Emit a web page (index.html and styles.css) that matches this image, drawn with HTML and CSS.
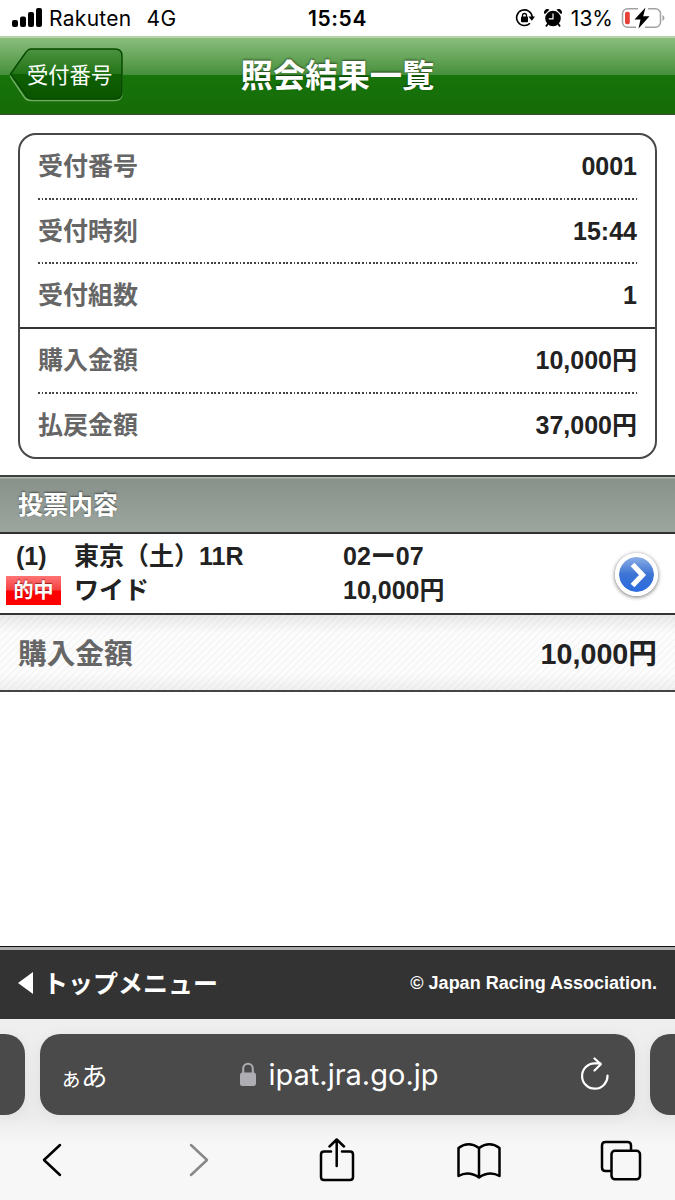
FILE: index.html
```html
<!DOCTYPE html>
<html lang="ja">
<head>
  <meta charset="UTF-8">
  <title>照会結果一覧</title>
  <link rel="stylesheet" href="styles.css">
</head>
<body>

<div class="status-bar">
  <div class="carrier">
    <svg class="signal" width="30" height="20" viewBox="0 0 30 20">
      <rect x="0" y="12" width="6" height="7" rx="2"/>
      <rect x="8" y="8.5" width="6" height="10.5" rx="2"/>
      <rect x="16" y="4" width="6" height="15" rx="2"/>
      <rect x="24" y="0" width="6" height="19" rx="2"/>
    </svg>
    <span class="carrier-name">Rakuten</span>
    <span>4G</span>
  </div>
  <div class="clock">15:54</div>
  <div class="indicators">
    <svg width="20" height="20" viewBox="0 0 20 20">
      <path d="M15 15.200A7.800 7.800 0 1 1 17.200 9" fill="none" stroke="#000" stroke-width="1.6"/>
      <path d="M13.400 8.400h6.600L16.900 12.800z"/>
      <rect x="6" y="8.600" width="7" height="5.600" rx="1"/>
      <path d="M7.500 9V7.500a2 2 0 0 1 4 0V9" fill="none" stroke="#000" stroke-width="1.3"/>
    </svg>
    <svg class="alarm" width="18" height="18" viewBox="0 0 18 18">
      <circle cx="9" cy="9.500" r="7.800"/>
      <path d="M.8 5.200a3.200 3.200 0 0 1 4.600-4.400zM12.600 .8a3.200 3.200 0 0 1 4.600 4.400z"/>
      <path d="M4 14.500L2 17.400M14 14.500L16 17.400" stroke="#000" stroke-width="1.800"/>
      <path d="M9 4.500V9.800H4.800" fill="none" stroke="#fff" stroke-width="1.200"/>
    </svg>
    <span class="percent">13%</span>
    <svg class="battery" width="44" height="22" viewBox="0 0 44 22">
      <path d="M17 1.8H6.5A5 5 0 0 0 1.5 6.8V15.200a5 5 0 0 0 5 5H15M27 1.8H34.500a5 5 0 0 1 5 5V15.200a5 5 0 0 1-5 5H24" fill="none" stroke="#a2a2a2" stroke-width="1.5"/>
      <path d="M41.500 8v6q2-1 2-3t-2-3z" fill="#a2a2a2"/>
      <rect x="4" y="4.800" width="4.800" height="12.400" rx="1.700" fill="#e8413a"/>
      <path d="M24.500 .5L13.500 12.500H19.500L17.500 21.500L28.500 9.200H22.200z"/>
    </svg>
  </div>
</div>

<div class="header">
  <a class="back">
    <svg width="116" height="56" viewBox="0 0 116 56">
      <defs>
        <linearGradient id="backFill" x1="0" y1="0" x2="0" y2="1">
          <stop offset="0" stop-color="#4d9340"/>
          <stop offset=".5" stop-color="#237417"/>
          <stop offset=".5" stop-color="#0f6003"/>
          <stop offset="1" stop-color="#095400"/>
        </linearGradient>
      </defs>
      <path d="M21 3.500H107Q114 3.500 114 10.500V46Q114 53.500 107 53.500H23Q19 53.500 16.500 50.500L2.500 29.500L16 7Q18.500 3.500 21 3.500z" fill="none" stroke="#6fae62" stroke-width="1.500"/>
      <path d="M23 2H107Q114 2 114 9V45Q114 52 107 52H25Q21 52 18.500 49L2.500 27L17 6.500Q20 2 23 2z" fill="url(#backFill)" stroke="#074a00" stroke-width="1.500"/>
    </svg>
    <span>受付番号</span>
  </a>
  <h1>照会結果一覧</h1>
</div>

<div class="summary">
  <div class="row"><span class="label">受付番号</span><span>0001</span></div>
  <div class="row"><span class="label">受付時刻</span><span>15:44</span></div>
  <div class="row group-end"><span class="label">受付組数</span><span>1</span></div>
  <div class="row"><span class="label">購入金額</span><span>10,000円</span></div>
  <div class="row last"><span class="label">払戻金額</span><span>37,000円</span></div>
</div>

<h2 class="section-title">投票内容</h2>

<div class="bet">
  <div class="bet-number">
    <span>(1)</span>
    <span class="hit">的中</span>
  </div>
  <div class="bet-race">
    <span>東京（土）11R</span>
    <span>ワイド</span>
  </div>
  <div class="bet-amount">
    <span>02<span class="dash">ー</span>07</span>
    <span>10,000円</span>
  </div>
  <div class="arrow">
    <svg width="18" height="26" viewBox="0 0 18 26">
      <path d="M3.500 2.500L13.500 13L3.500 23.500" fill="none" stroke="#fff" stroke-width="5.200"/>
    </svg>
  </div>
</div>

<div class="total">
  <span class="label">購入金額</span>
  <span>10,000円</span>
</div>

<div class="footer">
  <a class="top-menu"><span class="triangle"></span><span class="menu-text">トップメニュー</span></a>
  <span class="copyright">© Japan Racing Association.</span>
</div>

<div class="browser">
  <div class="tabs">
    <div class="tab-edge left"></div>
    <div class="address">
      <span class="reader"><small>ぁ</small>あ</span>
      <span class="url">
        <svg width="18" height="25" viewBox="0 0 18 25">
          <rect x="1" y="10.500" width="16" height="13.500" rx="2.500" fill="#aeadb3"/>
          <path d="M4.200 11V6.500a4.800 4.800 0 0 1 9.600 0V11" fill="none" stroke="#aeadb3" stroke-width="2"/>
        </svg>
        <span>ipat.jra.go.jp</span>
      </span>
      <svg class="reload" width="30" height="36" viewBox="0 0 30 36">
        <path d="M27.500 18.500A12.700 12.700 0 1 1 14.800 6.300H20.500M14.500 1.500L20.800 7.200L14.500 13.500" fill="none" stroke="#fff" stroke-width="2.200" stroke-linecap="round" stroke-linejoin="round"/>
      </svg>
    </div>
    <div class="tab-edge right"></div>
  </div>
  <div class="toolbar">
    <svg width="20" height="34" viewBox="0 0 20 34">
      <path d="M18 2L2 17L18 32"/>
    </svg>
    <svg class="disabled" width="20" height="34" viewBox="0 0 20 34">
      <path d="M2 2L18 17L2 32"/>
    </svg>
    <svg width="36" height="44" viewBox="0 0 36 44">
      <path d="M12 13.500H5Q2 13.500 2 16.500V39Q2 42 5 42H31Q34 42 34 39V16.500Q34 13.500 31 13.500H23"/>
      <path d="M17.700 28V2M10.500 8.500L17.700 1.500L25 8.500"/>
    </svg>
    <svg width="44" height="37" viewBox="0 0 44 37">
      <path d="M22 35.500Q11.500 28.500 1.500 34V6Q11.500-1.500 22 6Q32.500-1.500 42.500 6V34Q32.500 28.500 22 35.500V6"/>
    </svg>
    <svg width="42" height="41" viewBox="0 0 42 41">
      <path d="M11 31H5.500Q2 31 2 27.500V5.500Q2 2 5.500 2H27.500Q31 2 31 5.500V10"/>
      <rect x="11.500" y="10.800" width="28.500" height="28.500" rx="3.500"/>
    </svg>
  </div>
</div>

</body>
</html>
```
FILE: styles.css
```css
* {
  box-sizing: border-box;
}

body {
  margin: 0;
  width: 675px;
  height: 1200px;
  overflow: hidden;
  display: flex;
  flex-direction: column;
  background: #fff;
  color: #222;
  font-family: "Liberation Sans", "Noto Sans CJK JP", sans-serif;
  font-size: 25px;
  font-weight: bold;
}

svg {
  display: block;
  flex-shrink: 0;
}

h1, h2 {
  margin: 0;
}

/* status bar */
.status-bar {
  height: 36px;
  display: grid;
  grid-template-columns: 1fr 80px 1fr;
  align-items: center;
  color: #000;
  font-family: Inter, sans-serif;
  font-size: 21px;
  font-weight: 400;
}

.carrier {
  display: flex;
  align-items: center;
  padding-left: 12px;
  letter-spacing: 0.3px;
}

.carrier-name {
  margin: 0 15px 0 7px;
}

.clock {
  text-align: center;
  font-weight: 600;
  letter-spacing: 0.6px;
}

.indicators {
  display: flex;
  align-items: center;
  justify-content: flex-end;
  padding-right: 10px;
}

.alarm {
  margin: 0 9px 0 9px;
}

.percent {
  margin-right: 8px;
}

/* page header */
.header {
  height: 79px;
  display: grid;
  grid-template-columns: 170px 1fr 170px;
  align-items: center;
  border-top: 2px solid #b5d4ac;
  border-bottom: 1px solid #3c4c38;
  background: linear-gradient(#8bbe7e 0, #468f3a 37px, #16740a 37px, #176b08 100%);
}

.back {
  display: grid;
  align-items: center;
  padding: 0 0 2px 8px;
  color: #fff;
  font-size: 21.3px;
  font-weight: 400;
  line-height: 30px;
}

.back svg,
.back span {
  grid-area: 1 / 1;
}

.back span {
  padding: 2px 0 0 19px;
}

.header h1 {
  text-align: center;
  color: #fff;
  font-size: 32.3px;
  line-height: 40px;
  text-shadow: 0 -1px 2px rgba(0, 0, 0, 0.5);
}

/* receipt summary */
.summary {
  margin: 18px 18px 0;
  height: 326px;
  border: 2px solid #484848;
  border-radius: 18px;
}

.row {
  height: 64.7px;
  margin: 0 18px;
  padding-bottom: 2px;
  display: flex;
  align-items: center;
  justify-content: space-between;
  line-height: 30px;
  background: repeating-linear-gradient(90deg, #444 0, #444 1.8px, #fff 1.8px, #fff 3.6px) left bottom / 100% 2px no-repeat;
}

.row.group-end {
  margin: 0;
  padding: 1px 18px 2px;
  background: none;
  border-bottom: 2px solid #333;
}

.row.last {
  background: none;
}

.label {
  color: #666;
}

/* bets */
.section-title {
  margin-top: 16px;
  height: 59px;
  padding-left: 18px;
  line-height: 56px;
  color: #fff;
  font-size: 25px;
  border-top: 2px solid #384238;
  border-bottom: 2px solid #303030;
  background: linear-gradient(#b2b7b2 0, #b2b7b2 1px, #89918b 2px, #9ca69f 100%);
  text-shadow: 0 -1px 2px rgba(0, 0, 0, 0.5);
}

.bet {
  height: 81px;
  display: grid;
  grid-template-columns: 74px 269px 1fr 60px;
  padding-top: 5px;
  border-bottom: 2px solid #333;
}

.bet-number,
.bet-race,
.bet-amount {
  display: grid;
  grid-template-rows: 34px 34px;
  align-items: center;
  line-height: 34px;
}

.bet-number {
  padding-left: 6px;
}

.bet-number span:first-child {
  padding-left: 10px;
}

.hit {
  width: 55px;
  height: 29px;
  line-height: 30px;
  text-align: center;
  color: #fff;
  font-size: 20px;
  background: linear-gradient(#ff7474 0, #f54040 48%, #f00 52%, #f00 100%);
  text-shadow: 0 -1px 1px rgba(90, 0, 0, 0.6);
}

.dash {
  display: inline-block;
  width: 25px;
}

.arrow {
  width: 43px;
  height: 43px;
  margin-top: 14px;
  display: flex;
  align-items: center;
  justify-content: center;
  padding-left: 3px;
  border: 4px solid #fff;
  border-radius: 50%;
  background: linear-gradient(#8baee6, #3c74d4 50%, #2c6be0);
  background-clip: padding-box;
  box-shadow: 0 1px 4px rgba(0, 0, 0, 0.6);
}

.total {
  height: 77px;
  padding: 2px 18px 0;
  display: flex;
  align-items: center;
  justify-content: space-between;
  font-size: 28.7px;
  line-height: 36px;
  border-bottom: 2px solid #444;
  background:
    linear-gradient(rgba(0, 0, 0, 0.08), transparent 18px, transparent 58px, rgba(0, 0, 0, 0.05)),
    repeating-linear-gradient(135deg, #fcfcfc 0, #fcfcfc 3px, #f2f2f2 4px, #fcfcfc 5px);
}

/* page footer */
.footer {
  margin-top: auto;
  height: 73px;
  padding: 0 18px;
  display: flex;
  align-items: center;
  justify-content: space-between;
  color: #fff;
  border-top: 1px solid #111;
  background: linear-gradient(#aaa 0, #aaa 3px, #333 3px);
}

.top-menu {
  display: flex;
  align-items: center;
  line-height: 30px;
}

.menu-text {
  padding-top: 2px;
}

.triangle {
  border: 11px solid transparent;
  border-right: 15px solid #fff;
  border-left: 0;
  margin-right: 10px;
}

.copyright {
  font-size: 18px;
}

/* safari controls */
.browser {
  height: 181px;
  background: linear-gradient(#efefef, #ebebeb 95px, #f7f7f7 125px);
  font-family: Inter, "Noto Sans CJK JP", sans-serif;
  font-weight: 400;
}

.tabs {
  height: 96px;
  padding-top: 15px;
  display: grid;
  grid-template-columns: 25px 595px 25px;
  gap: 15px;
}

.tab-edge,
.address {
  height: 81px;
  background: #4a4a4a;
  box-shadow: 0 2px 14px rgba(0, 0, 0, 0.06);
}

.tab-edge.left {
  border-radius: 0 20px 20px 0;
}

.tab-edge.right {
  border-radius: 20px 0 0 20px;
}

.address {
  border-radius: 20px;
  padding: 0 25px 0 22px;
  display: grid;
  grid-template-columns: 104px 1fr 98px;
  align-items: center;
  color: #fff;
}

.reader {
  padding-top: 4px;
  font-size: 26.5px;
  line-height: 36px;
}

.reader small {
  font-size: 22px;
  margin: 0 -1px 0 -2px;
}

.url {
  display: flex;
  align-items: center;
  justify-content: center;
  gap: 11px;
  font-size: 29px;
}

.reload {
  justify-self: end;
}

.toolbar {
  height: 85px;
  padding: 5px 0 0 42px;
  display: grid;
  grid-template-columns: 147px 130px 138px 143px 1fr;
  align-items: center;
}

.toolbar svg {
  fill: none;
  stroke: #000;
  stroke-width: 2.5;
  stroke-linecap: round;
  stroke-linejoin: round;
}

.toolbar .disabled {
  stroke: #888;
}
```
